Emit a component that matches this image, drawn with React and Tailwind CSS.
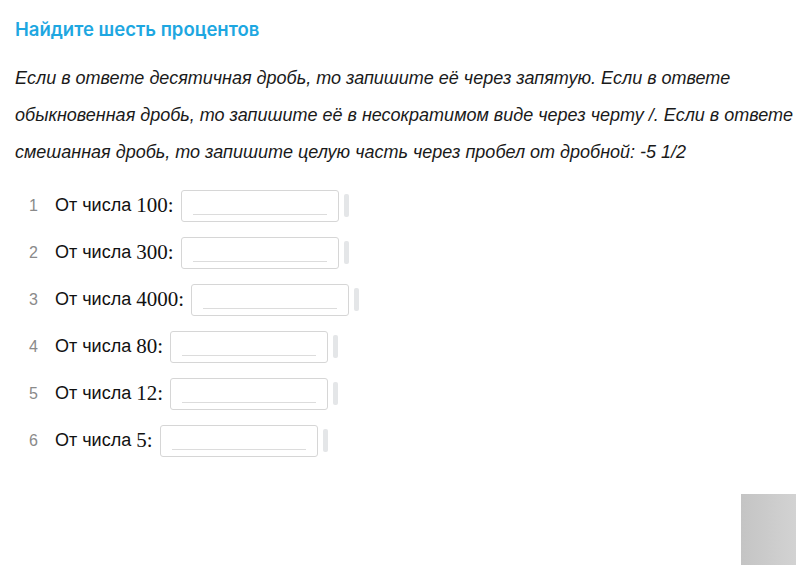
import React from 'react';

const rows = [
  { n: 1, v: '100' },
  { n: 2, v: '300' },
  { n: 3, v: '4000' },
  { n: 4, v: '80' },
  { n: 5, v: '12' },
  { n: 6, v: '5' },
];

const Row = ({ n, v }) => (
  <div className="flex items-center h-[47px]">
    <span className="w-[55px] pl-[29px] text-[16px] text-[#8a8a8a]">{n}</span>
    <span className="text-[18px] text-[#111]">От числа</span>
    <span className="ml-[5px] text-[21px] text-[#111] font-['Liberation_Serif',serif]">{v}:</span>
    <div className="ml-[7px] w-[158px] h-[32px] border border-[#d6d6d6] rounded-[3px] bg-white flex items-end px-[11px] pb-[6px]">
      <div className="w-full h-px bg-[#dcdcdc]" />
    </div>
    <div className="ml-[5px] w-[5px] h-[23px] rounded-[2px] bg-[#e4e6e8]" />
  </div>
);

export default function App() {
  return (
    <div className="relative w-[796px] h-[565px] bg-white overflow-hidden font-['Liberation_Sans',Arial,sans-serif]">
      <div className="pl-[15px] pt-[17px]">
        <h1 className="text-[18.5px] font-semibold text-[#1ea7e1] font-['Inter',sans-serif] leading-[24px]">
          Найдите шесть процентов
        </h1>
        <p className="mt-[19px] italic text-[18px] leading-[37px] text-[#1a1a1a] whitespace-nowrap">
          Если в ответе десятичная дробь, то запишите её через запятую. Если в ответе
          <br />
          обыкновенная дробь, то запишите её в несократимом виде через черту /. Если в ответе
          <br />
          смешанная дробь, то запишите целую часть через пробел от дробной: -5 1/2
        </p>
      </div>
      <div className="mt-[11px]">
        {rows.map((r) => (
          <Row key={r.n} {...r} />
        ))}
      </div>
      <div className="absolute left-[741px] top-[494px] w-[60px] h-[75px] bg-gradient-to-r from-[#c4c4c4] to-[#d4d4d4]" />
    </div>
  );
}
